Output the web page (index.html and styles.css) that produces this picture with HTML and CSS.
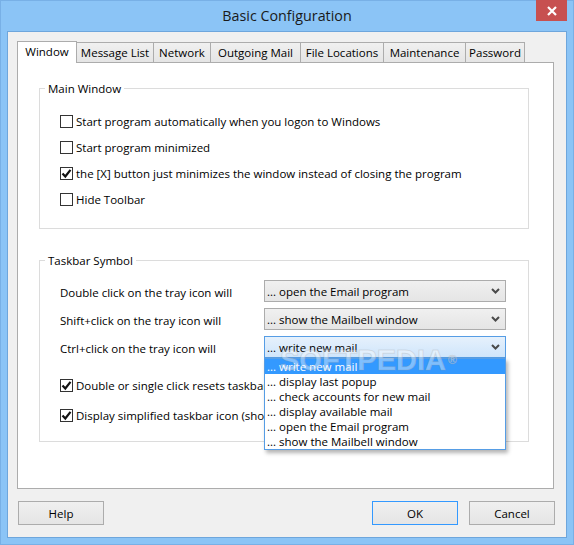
FILE: index.html
```html
<!DOCTYPE html>
<html>
<head>
<meta charset="utf-8">
<link rel="stylesheet" href="styles.css">
</head>
<body>
<div class="window">
  <div class="titlebar">
    <div class="title">Basic Configuration</div>
    <div class="close">
      <svg width="10" height="10" viewBox="0 0 10 10"><path d="M1 1 L9 9 M9 1 L1 9" stroke="#fff" stroke-width="2.2" fill="none"/></svg>
    </div>
  </div>
  <div class="client">
    <div class="tabs">
      <div class="tab active t-window">Window</div>
      <div class="tab t-msg">Message List</div>
      <div class="tab t-net">Network</div>
      <div class="tab t-out">Outgoing Mail</div>
      <div class="tab t-file">File Locations</div>
      <div class="tab t-maint">Maintenance</div>
      <div class="tab t-pass">Password</div>
    </div>
    <div class="panel">
      <fieldset class="group group-main">
        <legend>Main Window</legend>
        <div class="check-list">
          <div class="check"><span class="box"></span><span>Start program automatically when you logon to Windows</span></div>
          <div class="check"><span class="box"></span><span>Start program minimized</span></div>
          <div class="check"><span class="box checked"><svg width="11" height="11" viewBox="0 0 11 11"><path d="M1.5 5.5 L4.3 8.5 L9.5 1.8" stroke="#111" stroke-width="2.2" fill="none"/></svg></span><span>the [X] button just minimizes the window instead of closing the program</span></div>
          <div class="check"><span class="box"></span><span>Hide Toolbar</span></div>
        </div>
      </fieldset>
      <fieldset class="group group-taskbar">
        <legend>Taskbar Symbol</legend>
        <div class="combo-grid">
          <span class="combo-label">Double click on the tray icon will</span>
          <div class="combo"><span>... open the Email program</span><svg class="chev" width="9" height="6" viewBox="0 0 9 6"><path d="M1 1 L4.5 4.5 L8 1" stroke="#4a4a4a" stroke-width="2" fill="none"/></svg></div>
          <span class="combo-label">Shift+click on the tray icon will</span>
          <div class="combo"><span>... show the Mailbell window</span><svg class="chev" width="9" height="6" viewBox="0 0 9 6"><path d="M1 1 L4.5 4.5 L8 1" stroke="#4a4a4a" stroke-width="2" fill="none"/></svg></div>
          <span class="combo-label">Ctrl+click on the tray icon will</span>
          <div class="combo combo-open"><span>... write new mail</span><svg class="chev" width="9" height="6" viewBox="0 0 9 6"><path d="M1 1 L4.5 4.5 L8 1" stroke="#4a4a4a" stroke-width="2" fill="none"/></svg>
            <ul class="dropdown">
              <li class="selected">... write new mail</li>
              <li>... display last popup</li>
              <li>... check accounts for new mail</li>
              <li>... display available mail</li>
              <li>... open the Email program</li>
              <li>... show the Mailbell window</li>
            </ul>
          </div>
        </div>
        <div class="check-list check-list-tight">
          <div class="check"><span class="box checked"><svg width="11" height="11" viewBox="0 0 11 11"><path d="M1.5 5.5 L4.3 8.5 L9.5 1.8" stroke="#111" stroke-width="2.2" fill="none"/></svg></span><span class="clip">Double or single click resets taskbar icon</span></div>
          <div class="check"><span class="box checked"><svg width="11" height="11" viewBox="0 0 11 11"><path d="M1.5 5.5 L4.3 8.5 L9.5 1.8" stroke="#111" stroke-width="2.2" fill="none"/></svg></span><span class="clip">Display simplified taskbar icon (show no number)</span></div>
        </div>
      </fieldset>
      <span class="watermark">SOFTPEDIA<span class="reg">®</span></span>
    </div>
    <div class="buttons">
      <div class="btn">Help</div>
      <div class="btn-group">
        <div class="btn btn-default">OK</div>
        <div class="btn">Cancel</div>
      </div>
    </div>
  </div>
</div>
</body>
</html>
```

FILE: styles.css
```css
* { box-sizing: border-box; }
html, body { margin: 0; padding: 0; }
body {
  width: 574px;
  height: 545px;
  overflow: hidden;
  font-family: "Open Sans", "Noto Sans", sans-serif;
  font-size: 11.5px;
  color: #000;
}
.window {
  width: 574px;
  height: 545px;
  background: #8bc4f6;
  box-shadow: inset 0 0 0 1px #78b0e6;
  display: flex;
  flex-direction: column;
}
.titlebar {
  height: 31px;
  display: grid;
  grid-template-columns: 1fr auto 1fr;
}
.title {
  grid-column: 2;
  line-height: 32px;
  font-size: 14.3px;
  color: #1a1a1a;
}
.close {
  grid-column: 3;
  justify-self: end;
  align-self: start;
  width: 31px;
  height: 21px;
  margin-right: 7px;
  background: #c75050;
  display: flex;
  align-items: center;
  justify-content: center;
}
.close svg { display: block; }
.client {
  margin: 0 7px;
  height: 507px;
  border: 1px solid #6ea6dc;
  background: #f0f0f0;
  display: flex;
  flex-direction: column;
}
.tabs {
  display: flex;
  align-items: flex-end;
  margin: 9px 0 -1px 9px;
  height: 22px;
  position: relative;
  z-index: 1;
}
.tab {
  height: 20px;
  margin-bottom: 1px;
  margin-left: -1px;
  border: 1px solid #acacac;
  border-bottom: none;
  background: linear-gradient(#f0f0f0, #e5e5e5);
  text-align: center;
  line-height: 20px;
  white-space: nowrap;
}
.tab.active {
  height: 22px;
  margin-bottom: 0;
  margin-left: 0;
  background: #fff;
  line-height: 19px;
}
.t-window { width: 60px; }
.t-msg { width: 78px; }
.t-net { width: 58px; }
.t-out { width: 91px; }
.t-file { width: 84px; }
.t-maint { width: 83px; }
.t-pass { width: 60px; }
.panel {
  position: relative;
  margin-left: 9px;
  width: 537px;
  height: 427px;
  border: 1px solid #acacac;
  background: #fff;
  padding: 17px 0 0 21px;
}
.group {
  margin: 0;
  padding: 0;
  min-width: 0;
  width: 490px;
  border: 1px solid #dcdcdc;
}
.group legend {
  margin-left: 5px;
  padding: 0 3px;
  line-height: 17px;
  height: 16px;
}
.group-taskbar { margin-top: 23px; }
.check-list {
  display: flex;
  flex-direction: column;
  padding: 12px 0 16px 20px;
}
.check {
  height: 26px;
  display: flex;
  align-items: center;
  white-space: nowrap;
  line-height: 15px;
}
.clip {
  max-width: 188px;
  overflow: hidden;
}
.box {
  width: 13px;
  height: 13px;
  border: 1px solid #333;
  background: #fff;
  margin-right: 3px;
  flex: none;
  display: flex;
  align-items: center;
  justify-content: center;
}
.box svg { display: block; }
.combo-grid {
  display: grid;
  grid-template-columns: 204px 242px;
  grid-auto-rows: 22px;
  row-gap: 6px;
  padding: 12px 0 0 20px;
}
.combo-label {
  display: flex;
  align-items: center;
  padding-top: 3px;
  white-space: nowrap;
}
.combo {
  position: relative;
  border: 1px solid #acacac;
  background: linear-gradient(#f0f0f0, #e5e5e5);
  display: flex;
  align-items: center;
  justify-content: space-between;
  padding: 0 5px 0 2px;
}
.combo-open {
  border-color: #569de5;
  background: linear-gradient(#e6f1fc, #cfe5fb);
}
.chev { display: block; }
.dropdown {
  position: absolute;
  left: -1px;
  top: 21px;
  width: 242px;
  margin: 0;
  padding: 0;
  list-style: none;
  background: #fff;
  border: 1px solid #569de5;
  box-shadow: 2px 3px 4px rgba(0,0,0,0.3);
  z-index: 2;
}
.dropdown li {
  height: 15px;
  line-height: 15px;
  padding-left: 2px;
  white-space: nowrap;
}
.dropdown li.selected {
  background: #3399ff;
  color: #fff;
}
.check-list-tight {
  margin-top: 14px;
  padding: 0 0 13px 20px;
  gap: 4px;
}
.watermark {
  position: absolute;
  left: 262px;
  top: 283px;
  z-index: 3;
  font-family: "Liberation Sans", sans-serif;
  font-weight: bold;
  font-size: 29px;
  line-height: 29px;
  color: rgba(255,255,255,0.4);
  -webkit-text-stroke: 1px rgba(150,150,150,0.25);
  pointer-events: none;
  white-space: nowrap;
}
.watermark .reg {
  font-size: 12px;
  vertical-align: top;
  margin-left: 2px;
}
.buttons {
  display: flex;
  justify-content: space-between;
  margin-top: 12px;
  padding: 0 11px 0 10px;
}
.btn-group {
  display: flex;
  gap: 11px;
}
.btn {
  width: 86px;
  height: 24px;
  border: 1px solid #acacac;
  background: linear-gradient(#f0f0f0, #e5e5e5);
  display: flex;
  align-items: center;
  justify-content: center;
}
.btn-default { border-color: #3399ff; }
```
